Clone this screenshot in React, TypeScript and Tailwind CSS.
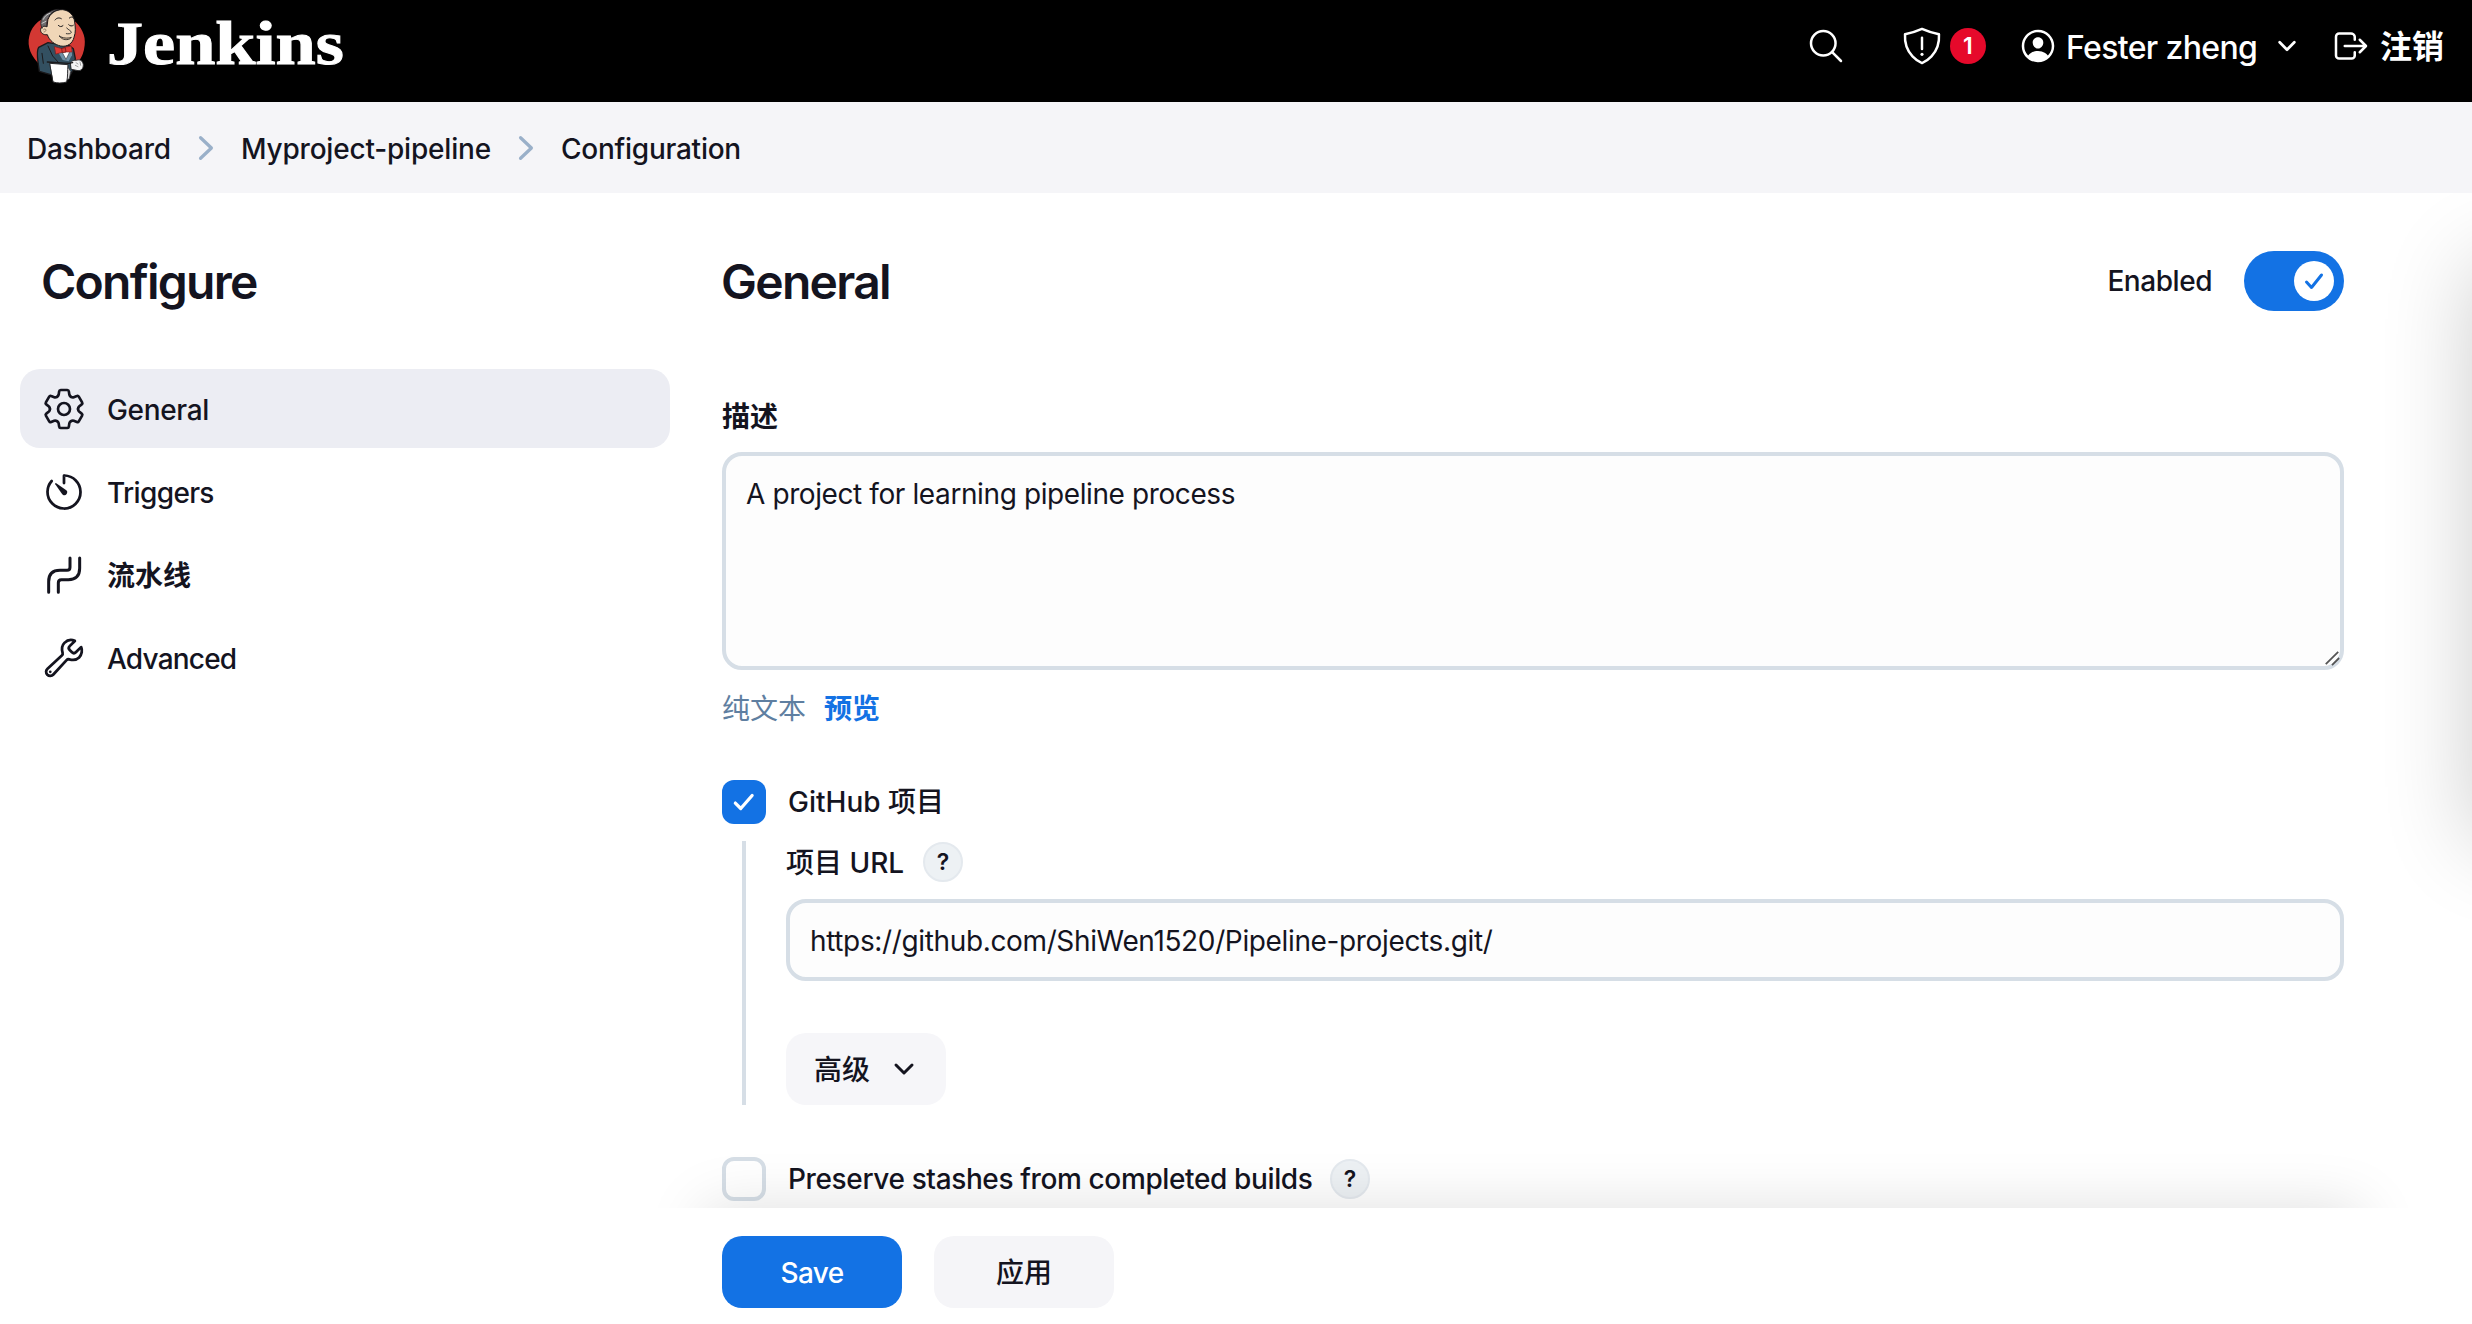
import type { ReactNode } from "react";
import {
  IoBuildOutline,
  IoLogOutOutline,
  IoPersonCircleOutline,
  IoSearchOutline,
  IoTimerOutline,
} from "react-icons/io5";

function JenkinsMascot() {
  return (
    <svg viewBox="0 0 240 288" className="mt-1 h-24 w-20 shrink-0" strokeLinejoin="round" strokeLinecap="round">
      <path d="M62 196C34 172 20 140 28 108C36 74 66 50 100 46L160 60C184 80 198 106 194 136C192 156 186 172 176 184Z" fill="#d33833" />
      {/* suit */}
      <path d="M84 128L56 142C50 150 52 170 54 186L58 214L92 224L150 226L158 212L166 176L160 146L150 138Z" fill="#335061" stroke="#1b1a1c" strokeWidth="4" />
      <path d="M112 152L128 180L146 184L156 166L156 148Z" fill="#6d8fa5" />
      <path d="M124 152L138 178L150 154Z" fill="#ffffff" stroke="#1b1a1c" strokeWidth="1.5" />
      <path d="M84 138L98 168L116 188M66 160L70 190" fill="none" stroke="#1b1a1c" strokeWidth="3" />
      {/* head */}
      <path d="M84 58C90 40 108 28 128 29C148 31 162 46 164 66C166 82 168 96 162 112C158 130 142 142 122 138C104 134 88 122 82 104C70 106 60 98 62 88C64 78 74 76 80 80Z" fill="#f0d6b7" stroke="#1b1a1c" strokeWidth="3" />
      <path d="M66 84C56 66 66 44 88 36C98 30 108 27 118 28C102 32 90 40 86 52C80 58 80 70 80 80C74 76 68 78 66 84Z" fill="#6d6b6d" stroke="#1b1a1c" strokeWidth="2" />
      <path d="M70 58C74 48 82 42 90 40M66 70L78 64" fill="none" stroke="#c9c9c9" strokeWidth="3" />
      <path d="M70 90C72 85 77 86 78 90C78 94 74 96 72 96" fill="none" stroke="#6b5a48" strokeWidth="2" />
      <path d="M105 60C110 53 118 52 124 56M148 54C152 50 158 50 161 54" fill="none" stroke="#1b1a1c" strokeWidth="3" />
      <path d="M115 76C118 81 125 81 129 77M146 74C150 79 156 79 160 76" fill="none" stroke="#1b1a1c" strokeWidth="3" />
      <path d="M140 84C146 90 154 93 154 97C152 102 145 102 139 101" fill="none" stroke="#1b1a1c" strokeWidth="2.5" />
      <path d="M118 108C128 115 142 116 154 112C150 120 132 122 124 114Z" fill="#e9c9a4" stroke="#1b1a1c" strokeWidth="2.5" />
      {/* bow tie */}
      <path d="M104 140L126 146L134 142L154 138L156 156L138 156L130 156L108 162Z" fill="#e03a34" stroke="#8f1d1a" strokeWidth="2" />
      <path d="M126 145L136 143L138 156L128 158Z" fill="#d33833" stroke="#5e1210" strokeWidth="2" />
      {/* glove and towel */}
      <path d="M152 188C158 178 168 182 172 180C182 178 188 184 190 194C190 206 184 212 174 212L154 208Z" fill="#f4f4f4" stroke="#2b2b2d" strokeWidth="3" />
      <path d="M168 188L174 192M166 196L174 200M180 186L182 196" stroke="#777" strokeWidth="2" />
      <path d="M140 196L152 214L148 236L140 240Z" fill="#d8d8d8" stroke="#2b2b2d" strokeWidth="2" />
      <path d="M90 190L144 194C142 214 144 230 140 246C126 250 112 250 100 246Z" fill="#ffffff" stroke="#2b2b2d" strokeWidth="3" />
      <path d="M82 186L146 190L158 188" fill="none" stroke="#1b1a1c" strokeWidth="4" />
    </svg>
  );
}

function ShieldAlertIcon() {
  return (
    <svg viewBox="0 0 512 512" className="size-[42px] shrink-0" fill="none" stroke="currentColor" strokeWidth="30" strokeLinecap="round" strokeLinejoin="round">
      <path d="M463.1 112.37C373.68 96.33 336.71 84.45 256 48c-80.71 36.45-117.68 48.33-207.1 64.37C32.7 369.13 240.58 457.79 256 464c15.42-6.21 223.3-94.87 207.1-351.63z" />
      <path d="M256 155v138" />
      <circle cx="256" cy="358" r="19" fill="currentColor" stroke="none" />
    </svg>
  );
}

function GearIcon() {
  const tooth =
    "M-21 -36.5Q-17 -39 -16 -43L-14.5 -53Q-14 -57 -10 -57H10Q14 -57 14.5 -53L16 -43Q17 -39 21 -36.5";
  return (
    <svg viewBox="-66 -66 132 132" className="size-11" fill="none" stroke="currentColor" strokeWidth="8" strokeLinecap="round" strokeLinejoin="round">
      {[0, 60, 120, 180, 240, 300].map((a) => (
        <path key={a} d={tooth} transform={`rotate(${a})`} />
      ))}
      <circle r="18" />
    </svg>
  );
}

function PipelineIcon() {
  return (
    <svg viewBox="18 549 132 132" className="size-11" fill="none" stroke="currentColor" strokeWidth="9" strokeLinecap="round" strokeLinejoin="round">
      <path d="M102 564V592Q102 601 93 601H72Q38 601 38 635V667" />
      <path d="M131 564V595Q131 629 97 629H76Q67 629 67 638V667" />
    </svg>
  );
}

function Chevron({ d, className }: { d: string; className: string }) {
  return (
    <svg viewBox="0 0 24 24" className={className} fill="none" stroke="currentColor" strokeWidth="3" strokeLinecap="round" strokeLinejoin="round">
      <path d={d} />
    </svg>
  );
}

const DOWN = "M4 8l8 8 8-8";
const RIGHT = "M7 2.5l10 9.5-10 9.5";

function Help() {
  return (
    <span className="flex size-10 items-center justify-center rounded-full border-2 border-[#e4e9ee] bg-[#edf1f4] text-[23px] font-semibold">
      ?
    </span>
  );
}

function Field({ children, className }: { children: ReactNode; className: string }) {
  return (
    <div className={`rounded-[20px] border-4 border-[#d6dee6] bg-[#fdfdfd] px-5 ${className}`}>{children}</div>
  );
}

const tasks = [
  { label: "General", icon: <GearIcon />, active: true, style: "tracking-[-0.35px]" },
  { label: "Triggers", icon: <IoTimerOutline className="size-11" />, active: false, style: "tracking-[-0.65px]" },
  { label: "流水线", icon: <PipelineIcon />, active: false, style: "font-semibold" },
  { label: "Advanced", icon: <IoBuildOutline className="size-11" />, active: false, style: "tracking-[-0.8px]" },
];

export default function App() {
  return (
    <div className="relative flex h-[1324px] w-[2472px] flex-col overflow-hidden whitespace-nowrap bg-white font-['Inter','Noto_Sans_CJK_SC',sans-serif] text-[28px] leading-10 font-medium text-[#14141f]">
      <header className="flex h-[102px] shrink-0 items-center bg-black pr-7 pb-[10px] pl-5 text-[32px] text-white">
        <JenkinsMascot />
        <span className="ml-[7px] inline-block origin-left scale-x-[1.165] pb-[7px] font-['Liberation_Serif',serif] text-[62px] leading-none font-bold [-webkit-text-stroke:1px_white]">
          Jenkins
        </span>
        <IoSearchOutline className="ml-auto size-10" />
        <div className="ml-[55px] flex items-center gap-[7px]">
          <ShieldAlertIcon />
          <span className="flex size-9 items-center justify-center rounded-full bg-[#e6092b] text-[23px] font-semibold">1</span>
        </div>
        <div className="ml-8 flex items-center">
          <IoPersonCircleOutline className="size-10" />
          <span className="ml-2 w-[210px] pt-[3px] tracking-[-0.65px]">Fester zheng</span>
          <Chevron d={DOWN} className="size-[22px]" />
        </div>
        <div className="ml-[33px] flex items-center gap-[9px]">
          <IoLogOutOutline className="size-10" />
          <span className="pt-0.5 font-bold">注销</span>
        </div>
      </header>

      <nav className="flex h-[91px] shrink-0 items-center bg-[#f5f5f8] pl-[27px]">
        <span className="w-[166px] pt-[3px] tracking-[-0.25px]">Dashboard</span>
        <Chevron d={RIGHT} className="size-[26px] text-[#9ab0c9]" />
        <span className="ml-[22px] w-[272px] pt-[3px] tracking-[-0.2px]">Myproject-pipeline</span>
        <Chevron d={RIGHT} className="size-[26px] text-[#9ab0c9]" />
        <span className="ml-[22px] pt-[3px] tracking-[-0.25px]">Configuration</span>
      </nav>

      <div className="relative flex flex-1 overflow-hidden">
        <aside className="w-[722px] shrink-0 pl-5">
          <h1 className="mt-[61px] pl-[21px] text-[48px] leading-[56px] font-semibold tracking-[-1.75px]">Configure</h1>
          <ul className="mt-[59px] flex w-[650px] flex-col gap-1">
            {tasks.map((t) => (
              <li
                key={t.label}
                className={`flex h-[79px] items-center gap-[21px] rounded-[20px] pl-[22px] ${t.active ? "bg-[#ecedf3]" : ""}`}
              >
                {t.icon}
                <span className={`pt-[3px] ${t.style}`}>{t.label}</span>
              </li>
            ))}
          </ul>
        </aside>

        <main className="w-[1622px] shrink-0">
          <div className="mt-[58px] flex h-[60px] items-center justify-between">
            <h2 className="-ml-px pt-0.5 text-[48px] font-semibold tracking-[-1.7px]">General</h2>
            <div className="flex items-center gap-8">
              <span className="tracking-[-0.45px]">Enabled</span>
              <span className="flex h-[60px] w-[100px] items-center justify-end rounded-full bg-[#1372e4] pr-[10px]">
                <span className="flex size-10 items-center justify-center rounded-full bg-white text-[#1372e4]">
                  <Chevron d="M4.500 13l5 5.500L19.500 6" className="size-6" />
                </span>
              </span>
            </div>
          </div>

          <div className="mt-[86px] font-semibold">描述</div>
          <Field className="relative mt-[15px] h-[218px] pt-[18px] font-normal tracking-[-0.4px]">
            A project for learning pipeline process
            <svg viewBox="0 0 18 18" className="absolute right-0 bottom-0 size-4" stroke="#555" strokeWidth="2">
              <path d="M2 16L16 2M9 17L17 9" />
            </svg>
          </Field>
          <div className="mt-[19px] flex gap-[17px]">
            <span className="font-normal text-[#5f7fa1]">纯文本</span>
            <span className="ml-px font-bold text-[#1372e4]">预览</span>
          </div>

          <div className="mt-[51px] flex h-11 items-center gap-[22px]">
            <span className="flex size-11 items-center justify-center rounded-xl bg-[#1372e4] text-white">
              <Chevron d="M4 13l5 5L19.500 6" className="size-[26px]" />
            </span>
            <span>GitHub 项目</span>
          </div>
          <div className="mt-[17px] ml-5 h-[264px] border-l-4 border-[#d6dee6] pl-10">
            <div className="flex h-[42px] items-center gap-[18px]">
              <span className="w-[119px] pt-0.5">项目 URL</span>
              <Help />
            </div>
            <Field className="mt-4 h-[82px] pt-[18px] font-normal tracking-[-0.36px]">
              https://github.com/ShiWen1520/Pipeline-projects.git/
            </Field>
            <div className="mt-[52px] flex h-[72px] w-40 items-center gap-[22px] rounded-[20px] bg-[#f6f6f9] pl-7">
              <span className="pt-0.5">高级</span>
              <Chevron d={DOWN} className="size-[24px]" />
            </div>
          </div>
          <div className="mt-[52px] flex h-11 items-center">
            <span className="size-11 rounded-xl border-4 border-[#d6dee6]" />
            <span className="ml-[22px] w-[542px] tracking-[-0.37px]">Preserve stashes from completed builds</span>
            <Help />
          </div>
        </main>

        {/* shadow cast by a panel past the right edge */}
        <div className="pointer-events-none absolute top-[70px] left-full h-[580px] w-40 shadow-[0_0_90px_rgba(0,0,0,0.2)]" />

        {/* sticky footer with the shadow above it */}
        <div className="absolute inset-x-0 bottom-0 flex h-[176px] flex-col">
          <div className="relative h-[60px] overflow-hidden">
            <div className="absolute top-full left-[704px] h-24 w-[1658px] shadow-[0_0_60px_rgba(0,0,0,0.13)]" />
          </div>
          <div className="flex flex-1 gap-8 bg-white pt-7 pl-[722px]">
            <div className="flex h-[72px] w-[180px] items-center justify-center rounded-[20px] bg-[#1372e4] pt-0.5 tracking-[-0.6px] text-white">Save</div>
            <div className="flex h-[72px] w-[180px] items-center justify-center rounded-[20px] bg-[#f5f5f8] pt-0.5">应用</div>
          </div>
        </div>
      </div>
    </div>
  );
}
